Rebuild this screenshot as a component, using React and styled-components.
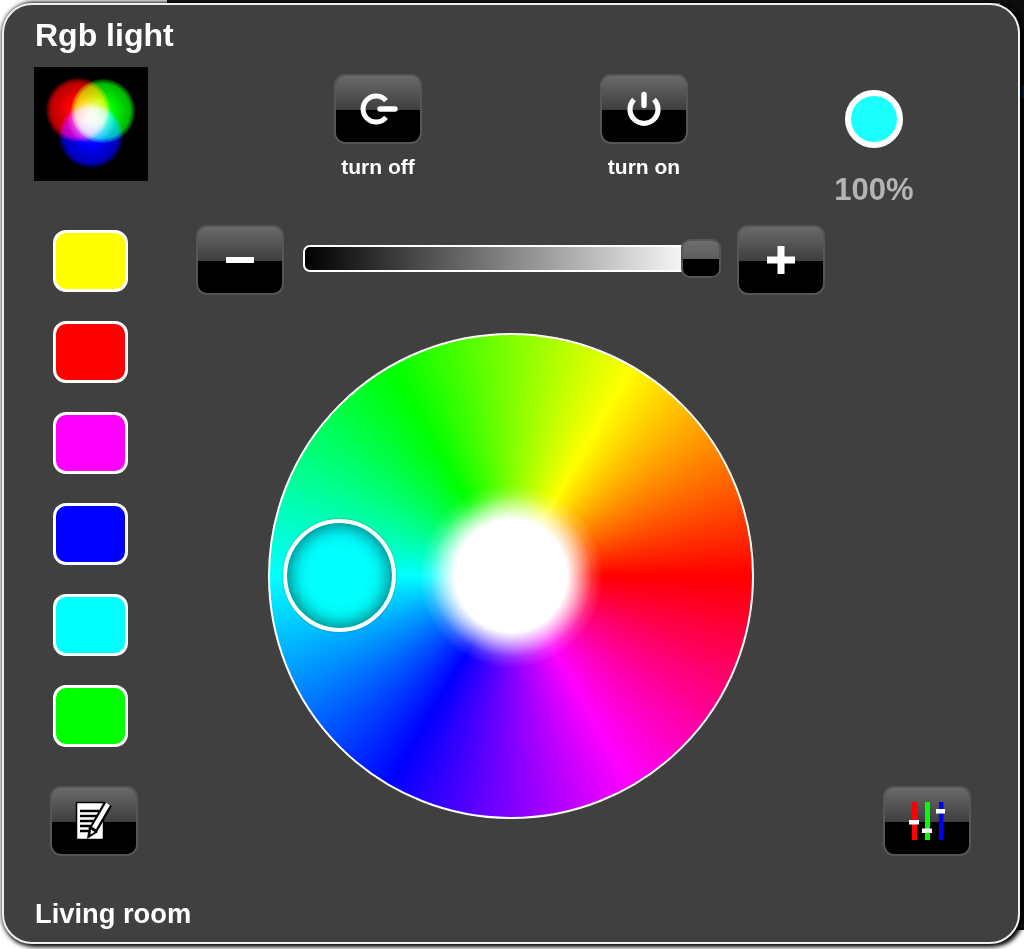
import React from "react";
import styled, { createGlobalStyle } from "styled-components";

const Global = createGlobalStyle`
  html, body { margin: 0; padding: 0; background: #ffffff; }
  body { font-family: "Liberation Sans", Arial, sans-serif; overflow: hidden; }
`;

const Page = styled.div`
  position: relative;
  width: 1024px;
  height: 949px;
  padding: 3px 0 0 2px;
  box-sizing: border-box;
  overflow: hidden;
  background:
    linear-gradient(#0c0c0c, #0c0c0c) right top / 24px 930px no-repeat,
    linear-gradient(#161616, #161616) 167px 0 / 857px 3px no-repeat,
    #ffffff;
`;

const SideGlow = styled.div`
  position: absolute;
  right: 0;
  top: 85px;
  width: 4px;
  height: 13px;
  background: #0b3a6e;
`;

const Panel = styled.main`
  position: relative;
  width: 1018px;
  height: 941px;
  box-sizing: border-box;
  border: 2px solid #f0f0f0;
  border-radius: 30px;
  background: #404040;
  box-shadow: 2px 1px 4px 2px #000000;
  padding: 0 0 0 30px;
  display: flex;
  flex-direction: column;
  color: #ffffff;
`;

const Title = styled.h1`
  margin: 12px 0 0 1px;
  font-size: 32px;
  line-height: 36px;
  font-weight: 700;
`;

const TopRow = styled.section`
  display: flex;
  align-items: flex-start;
  margin-top: 14px;
  height: 158px;
`;

const Logo = styled.svg`
  display: block;
  width: 114px;
  height: 114px;
  flex: none;
  background: #000000;
`;

const Action = styled.div`
  display: flex;
  flex-direction: column;
  align-items: center;
  width: 88px;
  margin: 7px 0 0 ${(p) => p.$offset}px;
`;

const ActionLabel = styled.span`
  margin-top: 11px;
  font-size: 21px;
  line-height: 24px;
  font-weight: 700;
  white-space: nowrap;
`;

const GlossButton = styled.button`
  flex: none;
  display: flex;
  align-items: center;
  justify-content: center;
  width: 88px;
  height: 70px;
  padding: 0;
  box-sizing: border-box;
  border: 2px solid #565656;
  border-radius: 11px;
  background: linear-gradient(180deg, #6a6a6a 0, #3e3e3e 52%, #000000 52%, #000000 100%);
`;

const Indicator = styled.div`
  display: flex;
  flex-direction: column;
  align-items: center;
  width: 90px;
  margin: 23px 0 0 141px;
`;

const Lamp = styled.div`
  width: 58px;
  height: 58px;
  box-sizing: border-box;
  border: 6px solid #ffffff;
  border-radius: 50%;
  background: #1cffff;
`;

const Percent = styled.span`
  margin-top: 24px;
  font-size: 31px;
  line-height: 36px;
  font-weight: 700;
  color: #b4b4b4;
`;

const Body = styled.section`
  display: grid;
  grid-template-columns: 161px 634px 147px;
  height: 632px;
`;

const LeftColumn = styled.div`
  display: flex;
  flex-direction: column;
  align-items: flex-start;
  justify-content: space-between;
  padding: 5px 0 1px 16px;
`;

const Swatches = styled.div`
  display: flex;
  flex-direction: column;
  gap: 29px;
  margin-left: 3px;
`;

const Swatch = styled.div`
  width: 75px;
  height: 62px;
  box-sizing: border-box;
  border: 3px solid #ffffff;
  border-radius: 13px;
  background: ${(p) => p.$color};
`;

const Middle = styled.div`
  display: flex;
  flex-direction: column;
  align-items: flex-start;
`;

const SliderRow = styled.div`
  display: flex;
  align-items: center;
  gap: 19px;
  margin-left: 1px;
`;

const Track = styled.div`
  position: relative;
  width: 415px;
  height: 70px;
  display: flex;
  align-items: center;
`;

const Groove = styled.div`
  width: 396px;
  height: 27px;
  margin-bottom: 3px;
  box-sizing: border-box;
  border: 2px solid #ffffff;
  border-radius: 7px;
  background: linear-gradient(90deg, #000000 0, #ffffff 100%);
`;

const Thumb = styled.div`
  position: absolute;
  left: 378px;
  top: 14px;
  width: 40px;
  height: 39px;
  box-sizing: border-box;
  border: 2px solid #565656;
  border-radius: 9px;
  background: linear-gradient(180deg, #6e6e6e 0, #5c5c5c 52%, #000000 52%, #000000 100%);
`;

const Wheel = styled.div`
  position: relative;
  width: 486px;
  height: 486px;
  margin: 38px 0 0 73px;
  box-sizing: border-box;
  border: 2px solid #ffffff;
  border-radius: 50%;
  background:
    radial-gradient(circle at 50% 50%, #ffffff 0, #ffffff 56px, rgba(255, 255, 255, 0.66) 67px, rgba(255, 255, 255, 0.18) 81px, rgba(255, 255, 255, 0) 92px),
    conic-gradient(from 90deg, #ff0000, #ff00ff, #0000ff, #00ffff, #00ff00, #ffff00, #ff0000);
`;

const Handle = styled.div`
  position: absolute;
  left: 13px;
  top: 184px;
  width: 113px;
  height: 113px;
  box-sizing: border-box;
  border: 4.5px solid #ffffff;
  border-radius: 50%;
  background: #00ffff;
  box-shadow: inset 0 0 20px rgba(0, 0, 0, 0.68), 0 0 2px rgba(0, 0, 0, 0.4);
`;

const RightColumn = styled.div`
  display: flex;
  align-items: flex-end;
  padding: 0 0 1px 54px;
`;

const Footer = styled.footer`
  margin: 41px 0 0 1px;
  font-size: 27.3px;
  line-height: 32px;
  font-weight: 700;
`;

const PowerOff = () => (
  <svg width="44" height="44" viewBox="0 0 44 44" fill="none" stroke="#fff" strokeLinecap="round">
    <path d="M30 13.6 A13 13 0 1 0 30 30.4" strokeWidth="5" strokeLinecap="butt" />
    <path d="M24 22 H39" strokeWidth="5.4" />
  </svg>
);

const PowerOn = () => (
  <svg width="44" height="44" viewBox="0 0 44 44" fill="none" stroke="#fff" strokeLinecap="round">
    <path d="M12 12.5 A14 14 0 1 0 32 12.5" strokeWidth="5.2" strokeLinecap="butt" />
    <path d="M22 7.5 V18.5" strokeWidth="5.4" />
  </svg>
);

const MinusIcon = () => (
  <svg width="28" height="6" viewBox="0 0 28 6">
    <rect width="28" height="6" fill="#fff" />
  </svg>
);

const PlusIcon = () => (
  <svg width="28" height="28" viewBox="0 0 28 28" fill="#fff">
    <rect y="10.5" width="28" height="7" />
    <rect x="10.5" width="7" height="28" />
  </svg>
);

const EditIcon = () => (
  <svg width="40" height="42" viewBox="0 0 40 42">
    <rect x="2.5" y="2.5" width="27" height="37" fill="#fff" stroke="#000" strokeWidth="1.5" />
    <path d="M6 11 H25 M6 16 H25 M6 21 H24 M6 26 H21 M6 31 H15" stroke="#000" strokeWidth="2.6" />
    <path d="M34 4 L19 30" stroke="#000" strokeWidth="9" />
    <path d="M34 4 L20 28" stroke="#fff" strokeWidth="4.5" />
    <path d="M15 26 L24 32 L13 39 Z" fill="#000" />
    <path d="M17 29.5 L20.5 32 L16.5 34.5 Z" fill="#fff" />
  </svg>
);

const MixerIcon = () => (
  <svg width="40" height="40" viewBox="0 0 40 40">
    <rect x="5" y="1" width="5" height="38" fill="#ff0000" />
    <rect x="18" y="1" width="5" height="38" fill="#00ff00" />
    <rect x="32" y="1" width="4.5" height="38" fill="#0000ff" />
    <rect x="2" y="19" width="10" height="4.5" fill="#fff" />
    <rect x="15" y="27.5" width="10" height="4.5" fill="#fff" />
    <rect x="29" y="8" width="9" height="4.5" fill="#fff" />
  </svg>
);

const RgbLogo = () => (
  <Logo viewBox="0 0 114 114">
    <defs>
      <radialGradient id="fr">
        <stop offset="0.3" stopColor="#ff0000" />
        <stop offset="0.85" stopColor="#ff0000" stopOpacity="0.72" />
        <stop offset="1" stopColor="#ff0000" stopOpacity="0.15" />
      </radialGradient>
      <radialGradient id="fg">
        <stop offset="0.3" stopColor="#00ff00" />
        <stop offset="0.85" stopColor="#00ff00" stopOpacity="0.72" />
        <stop offset="1" stopColor="#00ff00" stopOpacity="0.15" />
      </radialGradient>
      <radialGradient id="fb">
        <stop offset="0.3" stopColor="#0000ff" />
        <stop offset="0.85" stopColor="#0000ff" stopOpacity="0.72" />
        <stop offset="1" stopColor="#0000ff" stopOpacity="0.15" />
      </radialGradient>
      <radialGradient id="fw">
        <stop offset="0.15" stopColor="#ffffff" stopOpacity="0.8" />
        <stop offset="1" stopColor="#ffffff" stopOpacity="0" />
      </radialGradient>
    </defs>
    <g style={{ isolation: "isolate" }}>
      <circle cx="44" cy="43" r="32" fill="url(#fr)" style={{ mixBlendMode: "screen" }} />
      <circle cx="69" cy="44" r="32" fill="url(#fg)" style={{ mixBlendMode: "screen" }} />
      <circle cx="57" cy="69" r="32" fill="url(#fb)" style={{ mixBlendMode: "screen" }} />
      <circle cx="57" cy="53" r="24" fill="url(#fw)" style={{ mixBlendMode: "screen" }} />
    </g>
  </Logo>
);

const colors = ["#ffff00", "#ff0000", "#ff00ff", "#0000ff", "#00ffff", "#00ff00"];

export default function App() {
  return (
    <>
      <Global />
      <Page>
        <SideGlow />
        <Panel>
          <Title>Rgb light</Title>
          <TopRow>
            <RgbLogo />
            <Action $offset={186}>
              <GlossButton aria-label="turn off"><PowerOff /></GlossButton>
              <ActionLabel>turn off</ActionLabel>
            </Action>
            <Action $offset={178}>
              <GlossButton aria-label="turn on"><PowerOn /></GlossButton>
              <ActionLabel>turn on</ActionLabel>
            </Action>
            <Indicator>
              <Lamp />
              <Percent>100%</Percent>
            </Indicator>
          </TopRow>
          <Body>
            <LeftColumn>
              <Swatches>
                {colors.map((c) => <Swatch key={c} $color={c} />)}
              </Swatches>
              <GlossButton aria-label="edit"><EditIcon /></GlossButton>
            </LeftColumn>
            <Middle>
              <SliderRow>
                <GlossButton aria-label="minus"><MinusIcon /></GlossButton>
                <Track>
                  <Groove />
                  <Thumb />
                </Track>
                <GlossButton aria-label="plus"><PlusIcon /></GlossButton>
              </SliderRow>
              <Wheel>
                <Handle />
              </Wheel>
            </Middle>
            <RightColumn>
              <GlossButton aria-label="mixer"><MixerIcon /></GlossButton>
            </RightColumn>
          </Body>
          <Footer>Living room</Footer>
        </Panel>
      </Page>
    </>
  );
}
